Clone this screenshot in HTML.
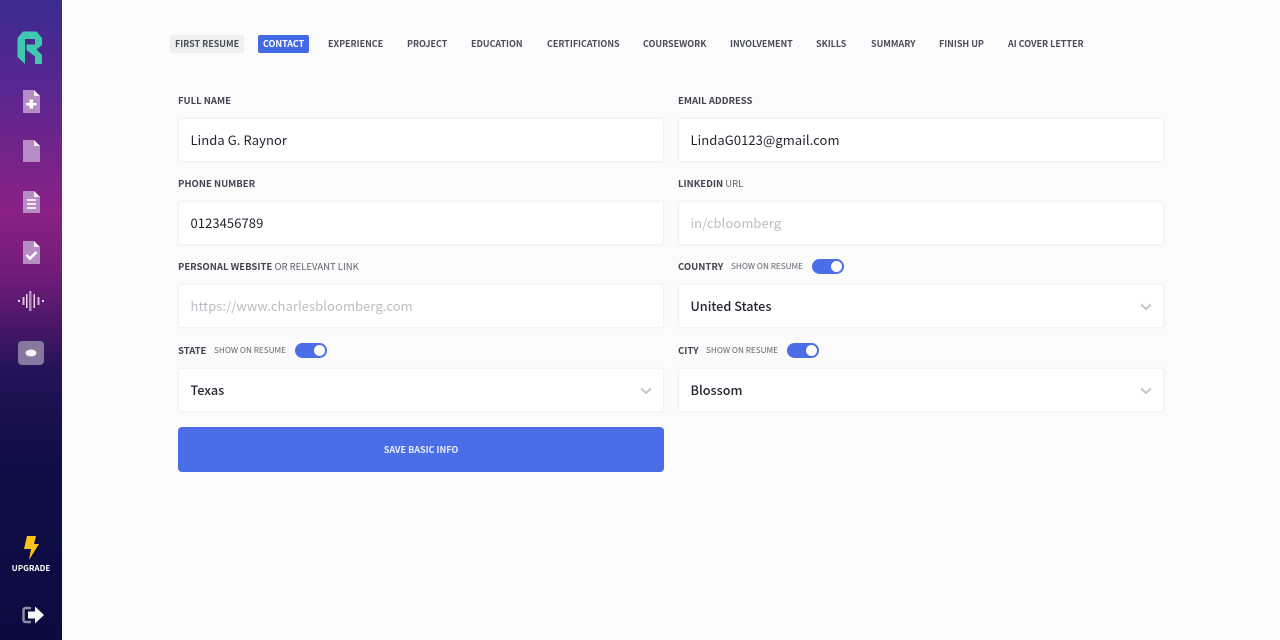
<!DOCTYPE html>
<html><head><meta charset="utf-8"><style>
html,body{margin:0;padding:0;width:1280px;height:640px;overflow:hidden;background:#fbfbfc}
body{font-family:"Noto Sans CJK JP","Liberation Sans",sans-serif;position:relative}
.a{position:absolute;white-space:nowrap}
#side{left:0;top:0;width:62px;height:640px;background:linear-gradient(180deg,#3c2b8e 0%,#5a2690 14%,#8a2184 33%,#6d1b78 44%,#241358 58%,#100e48 72%,#0b0b40 100%)}
.n{top:36px;font-size:8.95px;line-height:16px;font-weight:700;color:#4a4d57;letter-spacing:0}
.l{font-size:9.5px;line-height:14px;font-weight:700;color:#42454f;letter-spacing:0}
.l span{font-weight:400;color:#5f626b}
.s{font-size:8.2px;line-height:14px;color:#62656e;letter-spacing:0}
.f{width:484px;height:42px;background:#fff;border:1px solid #f2f3f4;border-radius:3px;box-shadow:0 0 1px #e8e9ec}
.t{font-size:13px;line-height:20px;color:#23262f;letter-spacing:.07px}
.m{font-size:12.7px;font-weight:500;letter-spacing:0}
.p{color:#bcbdc2}
.tg{width:32px;height:15px;border-radius:8px;background:#4b6ee8}
.tg i{position:absolute;right:2px;top:2px;width:11px;height:11px;border-radius:50%;background:#fff}
.c{width:12px;height:8px}
</style></head><body>
<div id="side" class="a"></div>
<svg class="a" style="left:0;top:0" width="62" height="640" viewBox="0 0 62 640">
<path d="M17.500 38L23 31.500H36.500L42 38V45L36.500 49.500L42 55V64H35V56.500L26.500 50V44.500H35V39H25V64L17.500 57Z" fill="#3ec9ae"/>
<g fill="#b68cc4"><path d="M23 90H34L40 96V113H23Z"/><path d="M23 140H34L40 146V162H23Z"/><path d="M23 191H34L40 197V213H23Z"/><path d="M23 241H34L40 247V264H23Z"/></g>
<g fill="#f3e9f5"><path d="M34 90L40 96H34Z"/><path d="M34 140L40 146H34Z"/><path d="M34 191L40 197H34Z"/><path d="M34 241L40 247H34Z"/></g>
<path d="M29.500 99.500H33V103H36.500V105.500H33V108.500H29.500V105.500H26V103H29.500Z" fill="#fff"/>
<g fill="#f3e9f5"><rect x="27" y="199" width="9" height="2"/><rect x="27" y="203" width="9" height="2"/><rect x="27" y="207" width="9" height="2"/></g>
<path d="M26.500 255L30 258.500L36.500 252" fill="none" stroke="#fff" stroke-width="2.600"/>
<g fill="#e9d6ec"><rect x="18" y="300" width="2" height="2"/><rect x="42" y="300" width="2" height="2"/></g>
<g fill="#d8b8de"><rect x="22.500" y="297" width="2" height="8"/><rect x="37.500" y="297" width="2" height="8"/></g>
<g fill="#b78cc4"><rect x="29" y="291" width="2.500" height="20"/></g>
<g fill="#eadcee"><rect x="26" y="294" width="1.500" height="14"/><rect x="33.500" y="294" width="1.500" height="14"/></g>
<rect x="18" y="341" width="26" height="24" rx="4" fill="#86789f"/>
<ellipse cx="31" cy="353" rx="5.500" ry="3.500" fill="#f4f2f6"/>
<path d="M27 536H36L34 544H39L29 560L31 549H24Z" fill="#fcc419"/>
<path d="M31 608H25.500C24 608 23.500 609 23.500 610V620C23.500 621 24 622 25.500 622H31" fill="none" stroke="#8c8ea3" stroke-width="2.500"/>
<path d="M28 611.500H35V606.500L44 615L35 623.500V618.500H28Z" fill="#fff"/>
</svg>
<div class="a" style="left:0;width:62px;top:562px;text-align:center;font-size:8.1px;line-height:13px;font-weight:700;color:#fff">UPGRADE</div>

<div class="a" style="left:170px;top:35px;width:74px;height:18px;background:#eeeff0;border-radius:2px"></div>
<div class="a" style="left:258px;top:35px;width:51px;height:18px;background:#4368e6;border-radius:2px"></div>
<div class="a n" style="left:175px">FIRST RESUME</div>
<div class="a n" style="left:263px;color:#fff">CONTACT</div>
<div class="a n" style="left:328px">EXPERIENCE</div>
<div class="a n" style="left:407px">PROJECT</div>
<div class="a n" style="left:471px">EDUCATION</div>
<div class="a n" style="left:547px">CERTIFICATIONS</div>
<div class="a n" style="left:643px">COURSEWORK</div>
<div class="a n" style="left:730px">INVOLVEMENT</div>
<div class="a n" style="left:816px">SKILLS</div>
<div class="a n" style="left:871px">SUMMARY</div>
<div class="a n" style="left:939px">FINISH UP</div>
<div class="a n" style="left:1008px">AI COVER LETTER</div>

<div class="a l" style="left:178px;top:93px">FULL NAME</div>
<div class="a l" style="left:678px;top:93px">EMAIL ADDRESS</div>
<div class="a f" style="left:178px;top:118px"></div><div class="a t" style="left:190.500px;top:130px">Linda G. Raynor</div>
<div class="a f" style="left:678px;top:118px"></div><div class="a t" style="left:690.500px;top:130px">LindaG0123@gmail.com</div>

<div class="a l" style="left:178px;top:176px">PHONE NUMBER</div>
<div class="a l" style="left:678px;top:176px">LINKEDIN <span>URL</span></div>
<div class="a f" style="left:178px;top:201px"></div><div class="a t" style="left:190.500px;top:213px">0123456789</div>
<div class="a f" style="left:678px;top:201px"></div><div class="a t p" style="left:690.500px;top:213px">in/cbloomberg</div>

<div class="a l" style="left:178px;top:259px">PERSONAL WEBSITE <span>OR RELEVANT LINK</span></div>
<div class="a l" style="left:678px;top:259px">COUNTRY</div>
<div class="a s" style="left:731px;top:259px">SHOW ON RESUME</div>
<div class="a tg" style="left:812px;top:259px"><i></i></div>
<div class="a f" style="left:178px;top:284px"></div><div class="a t p" style="left:190.500px;top:296px">https://www.charlesbloomberg.com</div>
<div class="a f" style="left:678px;top:284px"></div><div class="a t m" style="left:690.500px;top:296px">United States</div>

<div class="a l" style="left:178px;top:343px">STATE</div>
<div class="a s" style="left:214px;top:343px">SHOW ON RESUME</div>
<div class="a tg" style="left:295px;top:343px"><i></i></div>
<div class="a l" style="left:678px;top:343px">CITY</div>
<div class="a s" style="left:706px;top:343px">SHOW ON RESUME</div>
<div class="a tg" style="left:787px;top:343px"><i></i></div>
<div class="a f" style="left:178px;top:368px"></div><div class="a t m" style="left:190.500px;top:380px">Texas</div>
<div class="a f" style="left:678px;top:368px"></div><div class="a t m" style="left:690.500px;top:380px">Blossom</div>

<svg class="a c" style="left:1140px;top:303px" viewBox="0 0 12 8"><path d="M1 1.500L6 6L11 1.500" fill="none" stroke="#c4c5c9" stroke-width="2"/></svg>
<svg class="a c" style="left:640px;top:387px" viewBox="0 0 12 8"><path d="M1 1.500L6 6L11 1.500" fill="none" stroke="#c4c5c9" stroke-width="2"/></svg>
<svg class="a c" style="left:1140px;top:387px" viewBox="0 0 12 8"><path d="M1 1.500L6 6L11 1.500" fill="none" stroke="#c4c5c9" stroke-width="2"/></svg>

<div class="a" style="left:178px;top:427px;width:486px;height:45px;background:#4b6ee8;border-radius:4px;text-align:center;font-size:9px;line-height:45px;font-weight:700;color:#e8ecfb">SAVE BASIC INFO</div>
</body></html>
